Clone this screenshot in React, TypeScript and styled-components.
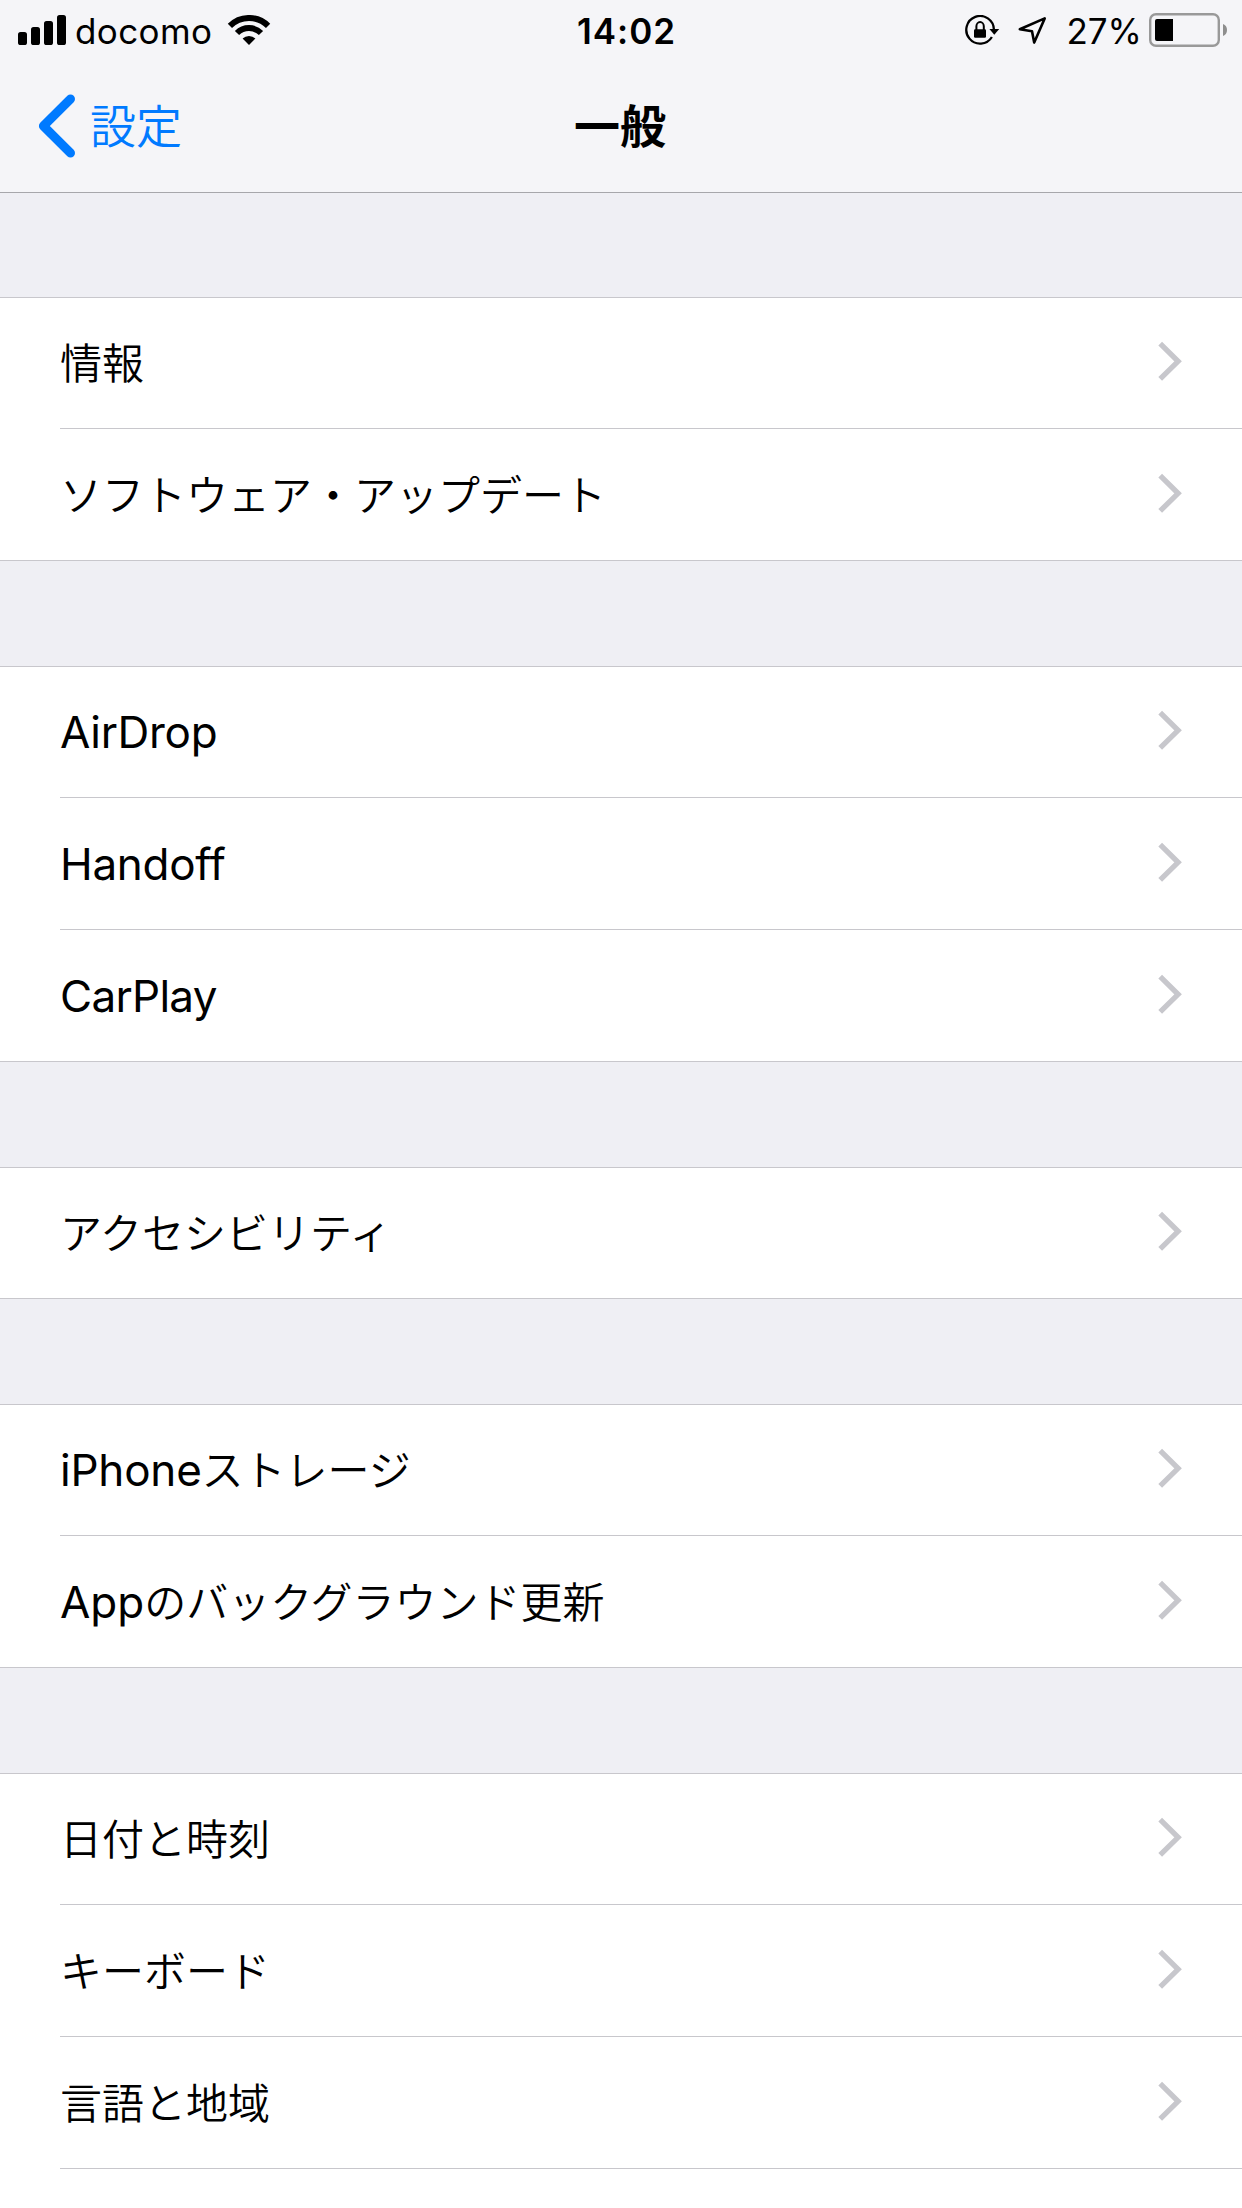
import React from "react";
import styled, { createGlobalStyle } from "styled-components";

const latin = `Inter, "Noto Sans CJK JP", sans-serif`;
const japanese = `"Noto Sans CJK JP", sans-serif`;

const GlobalStyle = createGlobalStyle`
  html, body { margin: 0; background: #efeff4; }
  body { height: 2208px; overflow: hidden; -webkit-font-smoothing: antialiased; }
  * { box-sizing: border-box; }
`;

const Screen = styled.div`
  width: 1242px;
  height: 2208px;
  overflow: hidden;
  background: #efeff4;
  color: #000;
  font-family: ${latin};
`;

const Header = styled.header`
  height: 193px;
  background: #f5f5f8;
  border-bottom: 1px solid #a7a7ab;
`;

const StatusBar = styled.div`
  display: grid;
  grid-template-columns: 1fr auto 1fr;
  align-items: center;
  height: 60px;
  padding: 0 15px 0 18px;
`;

const StatusGroup = styled.div<{ $end?: boolean }>`
  display: flex;
  align-items: center;
  justify-content: ${(p) => (p.$end ? "flex-end" : "flex-start")};
  svg { display: block; flex: none; }
`;

const StatusText = styled.span<{ $weight?: number; $spacing?: number; $margin?: string }>`
  padding-top: 2px;
  font-size: 35px;
  font-weight: ${(p) => p.$weight ?? 400};
  letter-spacing: ${(p) => p.$spacing ?? 0}px;
  margin: ${(p) => p.$margin ?? "0"};
  line-height: 58px;
  white-space: nowrap;
`;

const StatusSymbols = styled.div`
  display: flex;
  align-items: center;
  gap: 18px;
  margin-right: 19px;
`;

const NavBar = styled.nav`
  display: grid;
  grid-template-columns: 1fr auto 1fr;
  align-items: center;
  height: 132px;
  padding: 0 38px;
  font-family: ${japanese};
`;

const BackButton = styled.a`
  display: flex;
  align-items: center;
  gap: 14px;
  color: #007aff;
  svg { display: block; }
`;

const BackLabel = styled.span`
  padding-bottom: 7px;
  font-size: 46px;
  font-weight: 350;
  line-height: 60px;
`;

const Title = styled.h1`
  margin: 0 2px 0 0;
  padding-bottom: 7px;
  font-size: 46px;
  font-weight: 700;
  line-height: 60px;
`;

const List = styled.main`
  display: flex;
  flex-direction: column;
  gap: 105px;
  padding-top: 104px;
`;

const Group = styled.section`
  background: #fff;
  border-top: 1px solid #c8c7cc;
`;

const RowLine = styled.div<{ $last: boolean }>`
  margin-left: ${(p) => (p.$last ? 0 : 60)}px;
  padding-left: ${(p) => (p.$last ? 60 : 0)}px;
  border-bottom: 1px solid #c8c7cc;
`;

const Row = styled.div<{ $first: boolean }>`
  display: flex;
  align-items: center;
  justify-content: space-between;
  height: ${(p) => (p.$first ? 130 : 131)}px;
  padding: 0 58px ${(p) => (p.$first ? 4 : 3)}px 0;
  svg { display: block; flex: none; }
`;

const Label = styled.span`
  padding-bottom: 1px;
  font-family: ${japanese};
  font-size: 42px;
  font-weight: 350;
  line-height: 60px;
  white-space: nowrap;
`;

const Latin = styled.span<{ $spacing: number }>`
  font-family: ${latin};
  font-size: 44px;
  font-weight: 370;
  font-variant-ligatures: none;
  font-feature-settings: "calt" 0;
  line-height: 1;
  letter-spacing: ${(p) => p.$spacing}px;
`;

const SignalIcon = () => (
  <svg width="48" height="30" viewBox="0 0 48 30">
    <rect x="0" y="17" width="9" height="13" rx="2.6" />
    <rect x="13" y="12" width="9" height="18" rx="2.6" />
    <rect x="26" y="6" width="9" height="24" rx="2.6" />
    <rect x="39" y="0" width="9" height="30" rx="2.6" />
  </svg>
);

const WifiIcon = () => (
  <svg width="44" height="30" viewBox="-22 0 44 30">
    <g fill="none" stroke="#000" strokeWidth="6">
      <path d="M-19.1 10.9A27 27 0 0 1 19.1 10.9" />
      <path d="M-12 18A17 17 0 0 1 12 18" />
    </g>
    <path d="M0 30L-6.4 23.6A9 9 0 0 1 6.4 23.6Z" />
  </svg>
);

const RotationLockIcon = () => (
  <svg width="35" height="30" viewBox="0 0 35 30">
    <path d="M28.9 14.5A13.8 13.8 0 1 0 26.9 22" fill="none" stroke="#000" strokeWidth="2.3" />
    <path d="M24.4 14H34.2L29.3 19.8Z" />
    <rect x="9" y="14.2" width="12" height="8.6" rx="1.2" />
    <path d="M11.4 15V11.2a3.7 4.1 0 0 1 7.4 0V15" fill="none" stroke="#000" strokeWidth="2" />
  </svg>
);

const LocationIcon = () => (
  <svg width="29" height="30" viewBox="0 0 29 30">
    <path d="M1.8 14.3L26.7 3.4L16.2 27.6L14 16.2Z" fill="none" stroke="#000" strokeWidth="2.6" strokeLinejoin="round" />
  </svg>
);

const BatteryIcon = () => (
  <svg width="78" height="34" viewBox="0 0 78 34">
    <rect x="1.2" y="1.2" width="68.6" height="31.6" rx="5.8" fill="none" stroke="#999" strokeWidth="2.4" />
    <path d="M8 6H24V28H8A2 2 0 0 1 6 26V8A2 2 0 0 1 8 6Z" />
    <path d="M74 11Q78 12.5 78 17T74 23Z" fill="#8e8e8e" />
  </svg>
);

const BackIcon = () => (
  <svg width="38" height="64" viewBox="0 0 38 64">
    <path d="M32.5 5L5.4 32L32.5 59" fill="none" stroke="#007aff" strokeWidth="9" strokeLinecap="round" strokeLinejoin="round" />
  </svg>
);

const Chevron = () => (
  <svg width="26" height="40" viewBox="0 0 26 40">
    <path d="M2.2 2.7L20.1 20.3L2.2 37.9" fill="none" stroke="#c7c7cc" strokeWidth="5.3" />
  </svg>
);

type Item = { latin?: string; spacing?: number; text?: string };

const groups: Item[][] = [
  [{ text: "情報" }, { text: "ソフトウェア・アップデート" }],
  [
    { latin: "AirDrop", spacing: -0.3 },
    { latin: "Handoff", spacing: -0.3 },
    { latin: "CarPlay", spacing: -0.7 },
  ],
  [{ text: "アクセシビリティ" }],
  [
    { latin: "iPhone", spacing: -0.2, text: "ストレージ" },
    { latin: "App", spacing: 0, text: "のバックグラウンド更新" },
  ],
  [{ text: "日付と時刻" }, { text: "キーボード" }, { text: "言語と地域" }, {}],
];

export default function App() {
  return (
    <Screen lang="ja">
      <GlobalStyle />
      <Header>
        <StatusBar>
          <StatusGroup>
            <SignalIcon />
            <StatusText $spacing={0.4} $margin="0 15px 0 9px">docomo</StatusText>
            <WifiIcon />
          </StatusGroup>
          <StatusText $weight={600} $spacing={1} $margin="0 0 0 8px">14:02</StatusText>
          <StatusGroup $end>
            <StatusSymbols>
              <RotationLockIcon />
              <LocationIcon />
            </StatusSymbols>
            <StatusText $margin="0 7px 0 0">27%</StatusText>
            <BatteryIcon />
          </StatusGroup>
        </StatusBar>
        <NavBar>
          <BackButton>
            <BackIcon />
            <BackLabel>設定</BackLabel>
          </BackButton>
          <Title>一般</Title>
        </NavBar>
      </Header>
      <List>
        {groups.map((items, g) => (
          <Group key={g}>
            {items.map((item, i) => (
              <RowLine key={i} $last={i === items.length - 1}>
                <Row $first={i === 0}>
                  <Label>
                    {item.latin && <Latin $spacing={item.spacing ?? 0}>{item.latin}</Latin>}
                    {item.text}
                  </Label>
                  {(item.latin || item.text) && <Chevron />}
                </Row>
              </RowLine>
            ))}
          </Group>
        ))}
      </List>
    </Screen>
  );
}
